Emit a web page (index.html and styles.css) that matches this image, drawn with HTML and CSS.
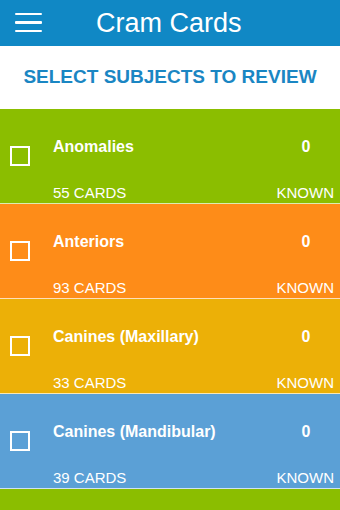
FILE: index.html
```html
<!DOCTYPE html>
<html lang="en">
 <head>
   <meta charset="UTF-8">
   <meta name="viewport" content="width=device-width, initial-scale=1.0">
   <title>Cram Cards</title>
   <link rel="stylesheet" href="styles.css">
 </head>
 <body>
   <div class="top-bar">
     <div class="menu-button">
       <span></span><span></span><span></span>
     </div>
     <h1 class="app-title">Cram Cards</h1>
   </div>

   <div class="subtitle">SELECT SUBJECTS TO REVIEW</div>

   <div class="subject-list">
     <div class="subject green">
       <div class="check-box"></div>
       <div class="subject-info">
         <div class="info-row">
           <span class="subject-name">Anomalies</span>
           <span class="known-count">0</span>
         </div>
         <div class="info-row small">
           <span>55 CARDS</span>
           <span class="known-label">KNOWN</span>
         </div>
       </div>
     </div>

     <div class="subject orange">
       <div class="check-box"></div>
       <div class="subject-info">
         <div class="info-row">
           <span class="subject-name">Anteriors</span>
           <span class="known-count">0</span>
         </div>
         <div class="info-row small">
           <span>93 CARDS</span>
           <span class="known-label">KNOWN</span>
         </div>
       </div>
     </div>

     <div class="subject yellow">
       <div class="check-box"></div>
       <div class="subject-info">
         <div class="info-row">
           <span class="subject-name">Canines (Maxillary)</span>
           <span class="known-count">0</span>
         </div>
         <div class="info-row small">
           <span>33 CARDS</span>
           <span class="known-label">KNOWN</span>
         </div>
       </div>
     </div>

     <div class="subject blue">
       <div class="check-box"></div>
       <div class="subject-info">
         <div class="info-row">
           <span class="subject-name">Canines (Mandibular)</span>
           <span class="known-count">0</span>
         </div>
         <div class="info-row small">
           <span>39 CARDS</span>
           <span class="known-label">KNOWN</span>
         </div>
       </div>
     </div>

     <div class="subject green last"></div>
   </div>
 </body>
</html>
```

FILE: styles.css
```css
  body {
      font-family: "Liberation Sans", Arial, sans-serif;
      margin: 0;
      padding: 0;
      background-color: #ffffff;
      overflow: hidden;
  }

  /* Blue title bar */
  .top-bar {
      height: 46px;
      background-color: #1088c5;
      display: flex;
      align-items: center;
  }

  .menu-button {
      width: 27px;
      margin-left: 15px;
      display: flex;
      flex-direction: column;
      gap: 6px;
      margin-top: -1px;
  }

  .menu-button span {
      display: block;
      height: 2.5px;
      background-color: #ffffff;
      border-radius: 1px;
  }

  .app-title {
      margin: 0 0 0 54px;
      font-size: 27px;
      font-weight: normal;
      color: #ffffff;
      line-height: 46px;
  }

  /* Heading under the bar */
  .subtitle {
      height: 63px;
      display: flex;
      align-items: center;
      justify-content: center;
      font-size: 19px;
      font-weight: bold;
      color: #1a86c3;
      padding-bottom: 1px;
      box-sizing: border-box;
  }

  /* Subject rows */
  .subject {
      height: 94px;
      display: flex;
      align-items: center;
      border-bottom: 1px solid rgba(255, 255, 255, 0.7);
      color: #ffffff;
  }

  .subject.last {
      height: 21px;
      border-bottom: none;
  }

  .green { background-color: #8bbe00; }
  .orange { background-color: #fe8c18; }
  .yellow { background-color: #ecb007; }
  .blue { background-color: #5ba0d6; }

  .check-box {
      width: 16px;
      height: 16px;
      border: 2px solid #ffffff;
      margin: 0 23px 0 10px;
      flex-shrink: 0;
  }

  .subject-info {
      flex: 1;
      align-self: stretch;
      padding-top: 28px;
      padding-right: 4px;
  }

  .info-row {
      display: flex;
      justify-content: space-between;
      height: 20px;
      line-height: 20px;
  }

  .subject-name {
      font-size: 16px;
      font-weight: bold;
  }

  .known-count {
      width: 58px;
      text-align: center;
      font-size: 16px;
      font-weight: bold;
      margin-right: 1px;
  }

  .info-row.small {
      margin-top: 26px;
      font-size: 15px;
  }

  .known-label {
      width: 58px;
      text-align: right;
      margin-right: 2px;
  }
```
